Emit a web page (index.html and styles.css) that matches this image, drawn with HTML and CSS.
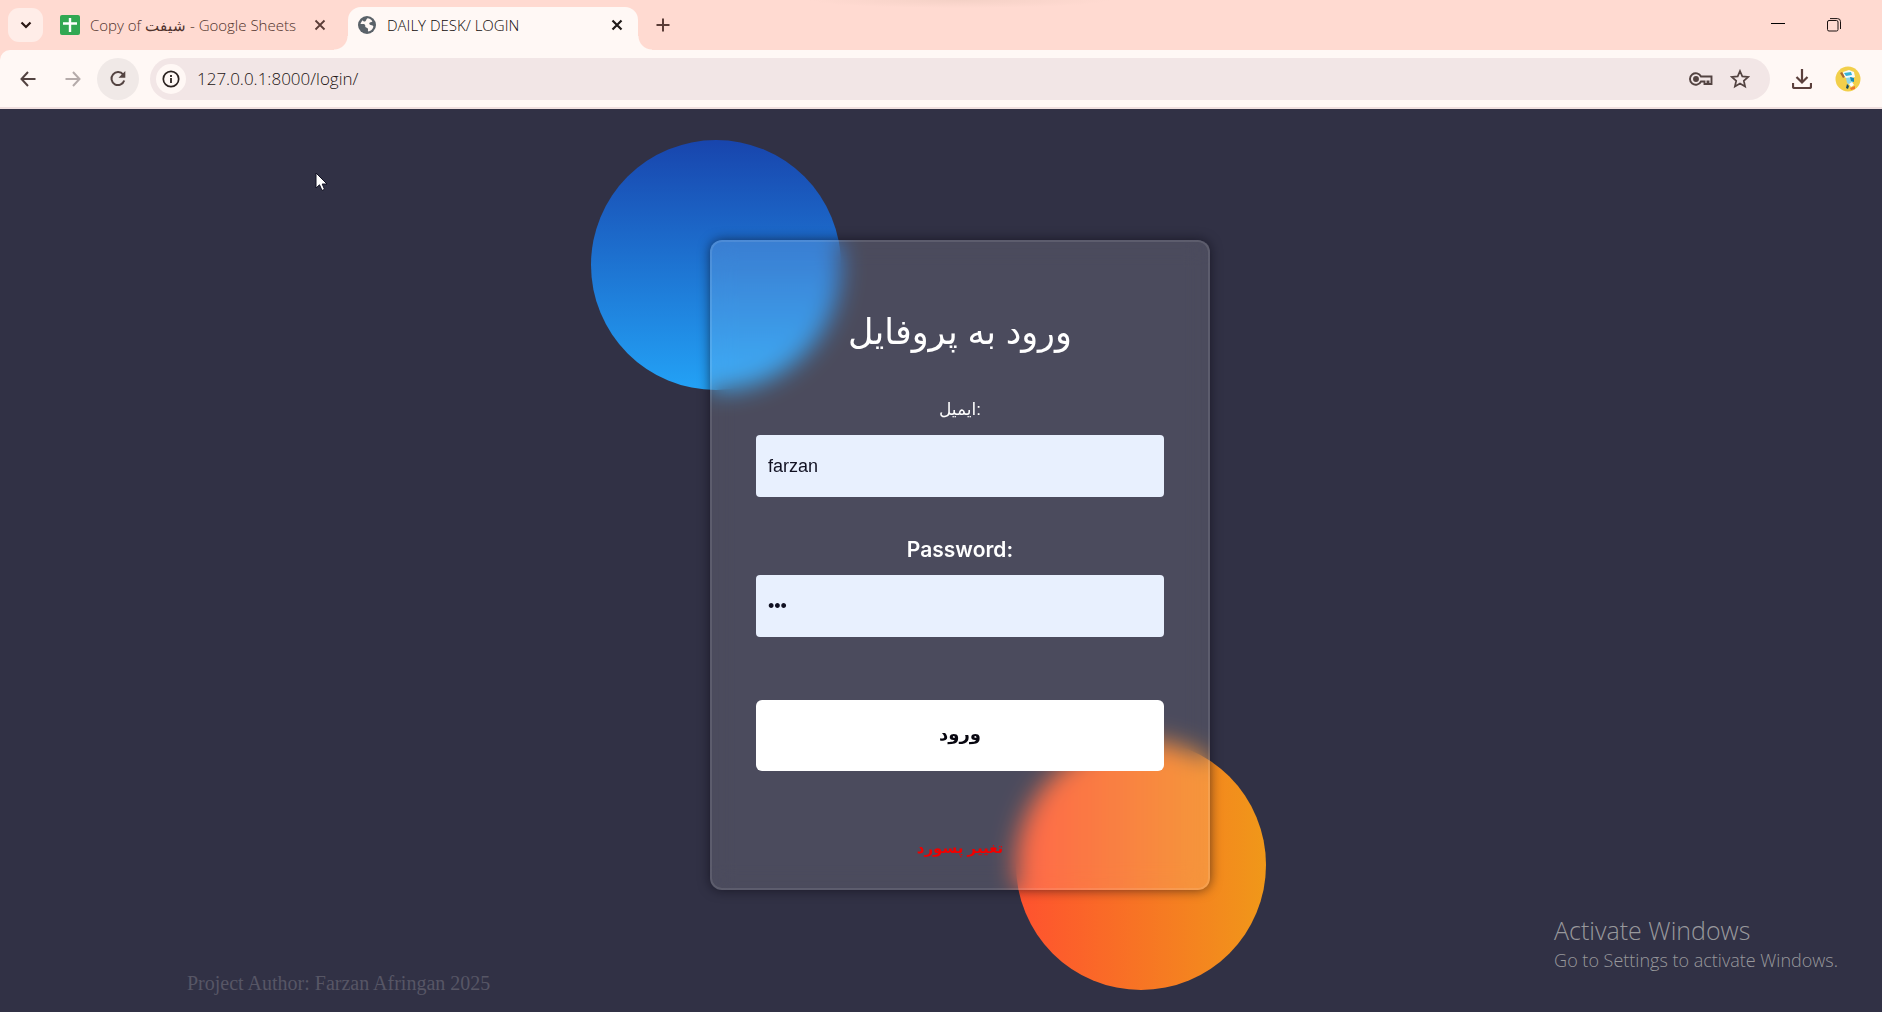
FILE: index.html
```html
<!DOCTYPE html>
<html lang="fa">
<head>
<meta charset="utf-8">
<meta name="viewport" content="width=device-width, initial-scale=1">
<title>DAILY DESK/ LOGIN</title>
<link rel="stylesheet" href="styles.css">
</head>
<body>
<header class="browser">
  <div class="tabstrip">
    <button class="tab-search" type="button" aria-label="Search tabs">
      <svg width="12" height="8" viewBox="0 0 12 8"><path d="M1.5 1.5 6 6l4.500-4.500" fill="none" stroke="#2b1713" stroke-width="2.200"/></svg>
    </button>
    <div class="tab">
      <svg class="favicon" width="20" height="20" viewBox="0 0 20 20"><rect width="20" height="20" rx="2" fill="#31a853"/><path d="M10 3v14M3 8.500h14" stroke="#fff" stroke-width="2.400"/></svg>
      <span class="tab-title">Copy of شیفت - Google Sheets</span>
      <button class="tab-close" type="button" aria-label="Close tab">
        <svg width="12" height="12" viewBox="0 0 12 12"><path d="m1.500 1.500 9 9m0-9-9 9" stroke="#5a3c37" stroke-width="1.800"/></svg>
      </button>
    </div>
    <div class="tab tab-active">
      <svg class="favicon" width="20" height="20" viewBox="0 0 20 20"><circle cx="10" cy="10" r="9" fill="#5a6269"/><path d="M10.500 3.300c2 .2 4.200 1.600 4.900 3.200-1 .9-2.600.6-3 1.500-.5 1 .4 1.800 1.300 1.900 1.300.1 2.700.4 2.700 1.800-.6 2.400-2.700 4.400-5.100 4.800-.8-.7 0-1.800-.3-2.700-.4-1-1.900-.8-2.500-1.700-.6-.8.100-1.700-.6-2.400C6.800 8.700 5 9.200 3.500 9c.3-1.400 1.200-2.900 2.300-3.800.4 1.100 1.600 1.500 2.600 1 1.200-.6.600-2.200 2.100-2.900z" fill="#fff8f5"/></svg>
      <span class="tab-title">DAILY DESK/ LOGIN</span>
      <button class="tab-close" type="button" aria-label="Close tab">
        <svg width="12" height="12" viewBox="0 0 12 12"><path d="m1.500 1.500 9 9m0-9-9 9" stroke="#201a19" stroke-width="2.200"/></svg>
      </button>
    </div>
    <button class="tab-new" type="button" aria-label="New tab">
      <svg width="14" height="14" viewBox="0 0 14 14"><path d="M7 .5v13M.5 7h13" stroke="#5a3c37" stroke-width="2"/></svg>
    </button>
    <div class="window-controls">
      <button type="button" aria-label="Minimize">
        <svg width="14" height="14" viewBox="0 0 14 14"><path d="M0 5.500h14" stroke="#000"/></svg>
      </button>
      <button type="button" aria-label="Restore">
        <svg width="14" height="14" viewBox="0 0 14 14" fill="none" stroke="#1a1110"><rect x=".5" y="2.500" width="10.500" height="10.500" rx="1.500"/><path d="M3 .6h7.500a3 3 0 0 1 3 3V11"/></svg>
      </button>
    </div>
  </div>
  <div class="toolbar">
    <button class="nav-button" type="button" aria-label="Back">
      <svg width="16" height="16" viewBox="0 0 16 16" fill="none" stroke="#534341" stroke-width="2"><path d="M15.500 8H2M8 1 1.500 8 8 15"/></svg>
    </button>
    <button class="nav-button" type="button" aria-label="Forward" disabled>
      <svg width="16" height="16" viewBox="0 0 16 16" fill="none" stroke="#b5abaa" stroke-width="2"><path d="M.5 8H14M8 1l6.500 7L8 15"/></svg>
    </button>
    <button class="nav-button nav-reload" type="button" aria-label="Reload">
      <svg width="18" height="18" viewBox="0 0 18 18"><path d="M14.200 4.700A6.500 6.500 0 1 0 15.200 10.500" fill="none" stroke="#534341" stroke-width="2"/><path d="M16.300 1v6.800h-6.800z" fill="#534341"/></svg>
    </button>
    <div class="omnibox">
      <button class="site-info" type="button" aria-label="Site information">
        <svg width="18" height="18" viewBox="0 0 18 18"><circle cx="9" cy="9" r="7.700" fill="none" stroke="#2b2220" stroke-width="1.700"/><path d="M9 8v5M9 5v2" stroke="#2b2220" stroke-width="1.800"/></svg>
      </button>
      <input class="address" type="text" value="127.0.0.1:8000/login/" aria-label="Address">
      <button class="omni-action" type="button" aria-label="Passwords">
        <svg width="24" height="16" viewBox="0 0 24 16" fill="none" stroke="#534341" stroke-width="1.900"><path d="M12 5.500A5.800 5.800 0 1 0 12 10.500h3.500v2.500h3v-2.500h1v2.500h3V5.500z"/><circle cx="7" cy="8" r="2" fill="#534341"/></svg>
      </button>
      <button class="omni-action" type="button" aria-label="Bookmark this page">
        <svg width="20" height="20" viewBox="0 0 20 20"><path d="m10 2 2.300 5.400 5.900.5-4.400 3.900 1.300 5.700L10 14.500l-5.100 3 1.300-5.700-4.400-3.900 5.900-.5z" fill="none" stroke="#534341" stroke-width="1.700"/></svg>
      </button>
    </div>
    <button class="nav-button" type="button" aria-label="Downloads">
      <svg width="20" height="20" viewBox="0 0 20 20" fill="none" stroke="#5b403c" stroke-width="2.200"><path d="M10 0v13M4.500 8l5.500 5.500L15.500 8M1 14v3.500a1.500 1.500 0 0 0 1.500 1.500h15a1.500 1.500 0 0 0 1.500-1.500V14"/></svg>
    </button>
    <button class="profile" type="button" aria-label="Profile">
      <svg width="26" height="26" viewBox="0 0 26 26"><circle cx="13" cy="13" r="12.500" fill="#f2cf4a"/><path d="m8 6 6-2 5 2 1 5-6 2-5-2z" fill="#f4fbfc"/><path d="m9 7 7-1 1 3-6 1z" fill="#36b4d8"/><path d="m11 12 6-1 2 4-4 4-3-2z" fill="#8fd6e6"/><path d="m15 11 4 1v4l-3-1z" fill="#178bb5"/><path d="m5 7 2-1 3 5-2 1z" fill="#a76832"/><path d="m14 18 3-2 2 3-3 2z" fill="#fff"/><path d="m12 18 2 2-1 3-2-1z" fill="#124c63"/><path d="m15 22 5-2v3l-4 1z" fill="#ee782e"/></svg>
    </button>
  </div>
</header>

<main class="page">
  <div class="stage">
    <div class="shape shape-blue"></div>
    <div class="shape shape-orange"></div>
    <form class="card">
      <h1 class="card-title">ورود به پروفایل</h1>
      <label class="field-label" for="username">ایمیل:</label>
      <input class="field" id="username" type="text" value="farzan">
      <label class="field-label field-label-latin" for="password">Password:</label>
      <input class="field" id="password" type="password" value="123">
      <button class="submit" type="button">ورود</button>
      <a class="change-link" href="#">تغییر پسورد</a>
    </form>
  </div>
  <footer class="author">Project Author: Farzan Afringan 2025</footer>
  <aside class="activation">
    <p class="activation-title">Activate Windows</p>
    <p class="activation-text">Go to Settings to activate Windows.</p>
  </aside>
  <svg class="pointer" width="14" height="20" viewBox="0 0 14 20"><path d="M1 1v15l3.500-3.200L7 18.500l2.500-1.200L7.200 12H12z" fill="#fff" stroke="#111122" stroke-width="1"/></svg>
</main>
</body>
</html>
```

FILE: styles.css
```css
* {
  box-sizing: border-box;
  margin: 0;
  padding: 0;
}

body {
  display: flex;
  flex-direction: column;
  min-height: 100vh;
  overflow: hidden;
  background: #313145;
  font-family: "Liberation Sans", "DejaVu Sans", sans-serif;
}

button,
input {
  border: 0;
  outline: 0;
  font: inherit;
}

button {
  display: flex;
  align-items: center;
  justify-content: center;
  background: none;
}

svg {
  display: block;
  flex: none;
}

/* Browser frame */
.browser {
  background: linear-gradient(#ffdad1 70px, #efdfdf 70px);
  font-family: "Open Sans", "DejaVu Sans", sans-serif;
}

.tabstrip {
  display: flex;
  align-items: center;
  height: 50px;
  padding-left: 8px;
  background: radial-gradient(150px 8px at 51% 0, #f4d1c6, #ffdad1);
}

.tab-search {
  width: 35px;
  height: 34px;
  border-radius: 11px;
  background: #ffede8;
}

.tab {
  display: flex;
  align-items: center;
  align-self: flex-end;
  width: 290px;
  height: 43px;
  margin-left: 5px;
  padding: 0 7px 7px 12px;
  color: #4f322c;
  font-size: 15px;
  font-weight: 300;
}

.tab-active {
  position: relative;
  margin-left: 10px;
  padding: 0 10px 7px 9px;
  border-radius: 13px 13px 0 0;
  background: #fff8f5;
  color: #100a09;
}

/* Flared feet that join the active tab to the toolbar */
.tab-active::before,
.tab-active::after {
  content: "";
  position: absolute;
  bottom: 0;
  width: 14px;
  height: 14px;
}

.tab-active::before {
  right: 100%;
  background: radial-gradient(circle at 0 0, transparent 13px, #fff8f5 14px);
}

.tab-active::after {
  left: 100%;
  background: radial-gradient(circle at 100% 0, transparent 13px, #fff8f5 14px);
}

.tab-title {
  flex: 1;
  margin-left: 10px;
  white-space: nowrap;
}

.tab-close {
  width: 22px;
  height: 22px;
}

.tab-new {
  width: 34px;
  height: 34px;
  margin-left: 8px;
}

.window-controls {
  display: flex;
  margin-left: auto;
  padding-right: 20px;
}

.window-controls button {
  width: 56px;
  height: 50px;
}

.toolbar {
  display: flex;
  align-items: center;
  height: 57px;
  margin-bottom: 2px;
  padding: 0 20px 0 7px;
  gap: 3px;
  border-radius: 10px 0 0 0;
  background: #fff8f5;
}

.browser::after {
  content: "";
  display: block;
  height: 2px;
  margin-top: -2px;
  background: #efdfdf;
}

.nav-button {
  width: 42px;
  height: 42px;
  border-radius: 50%;
}

.nav-reload {
  background: #f0e9e7;
}

.omnibox {
  display: flex;
  flex: 1;
  align-items: center;
  height: 42px;
  margin: 0 8px;
  padding: 0 16px 0 6px;
  gap: 11px;
  border-radius: 21px;
  background: #f2e6e6;
}

.site-info {
  width: 30px;
  height: 30px;
  border-radius: 50%;
  background: #fff8f5;
}

.address {
  flex: 1;
  min-width: 0;
  background: none;
  color: #1c1413;
  font-size: 17px;
  font-weight: 300;
}

.omni-action {
  width: 28px;
  height: 28px;
}

.profile {
  width: 28px;
  height: 28px;
  margin-left: 8px;
}

/* Login page */
.page {
  position: relative;
  flex: 1;
  padding: 131px 0 0 38px;
}

.stage {
  position: relative;
  width: 500px;
  max-width: 100%;
  margin: 0 auto;
}

.shape {
  position: absolute;
  width: 250px;
  height: 250px;
  border-radius: 50%;
}

.shape-blue {
  top: -100px;
  left: -119px;
  background: linear-gradient(#1845ad, #23a2f6);
}

.shape-orange {
  right: -56px;
  bottom: -100px;
  background: linear-gradient(to right, #ff512f, #f09819);
}

.card {
  position: relative;
  display: flex;
  flex-direction: column;
  padding: 62px 44px 26px;
  border: 2px solid rgba(255, 255, 255, 0.1);
  border-radius: 12px;
  background: rgba(255, 255, 255, 0.13);
  backdrop-filter: blur(12px);
  box-shadow: 0 0 12px rgba(8, 7, 16, 0.6);
  color: #fff;
  text-align: center;
}

.card-title {
  margin-bottom: 35px;
  font-size: 35px;
  font-weight: 400;
  line-height: 56px;
}

.field-label {
  font-size: 17px;
  line-height: 30px;
}

.field-label-latin {
  margin-top: 38px;
  font-family: Inter, sans-serif;
  font-size: 21px;
  font-weight: 600;
}

.field {
  width: 100%;
  height: 62px;
  margin-top: 10px;
  padding: 0 12px;
  border-radius: 4px;
  background: #e8f0fe;
  color: #111122;
  font-size: 18px;
}

.submit {
  height: 71px;
  margin-top: 63px;
  padding-bottom: 4px;
  border-radius: 6px;
  background: #fff;
  color: #080710;
  font-size: 18px;
  font-weight: 700;
}

.change-link {
  align-self: center;
  margin-top: 63px;
  color: #f00000;
  font-size: 15px;
  font-weight: 700;
  line-height: 28px;
  text-decoration: none;
}

.author {
  margin: 79px 0 0 149px;
  color: #575665;
  font-family: "Liberation Serif", serif;
  font-size: 20px;
  line-height: 28px;
}

.activation {
  position: absolute;
  right: 44px;
  bottom: 38px;
  color: #98989c;
  font-family: "Open Sans", sans-serif;
  font-weight: 300;
}

.activation-title {
  font-size: 25px;
  line-height: 32px;
}

.activation-text {
  font-size: 18px;
  line-height: 28px;
}

.pointer {
  position: absolute;
  top: 63px;
  left: 315px;
}
```
